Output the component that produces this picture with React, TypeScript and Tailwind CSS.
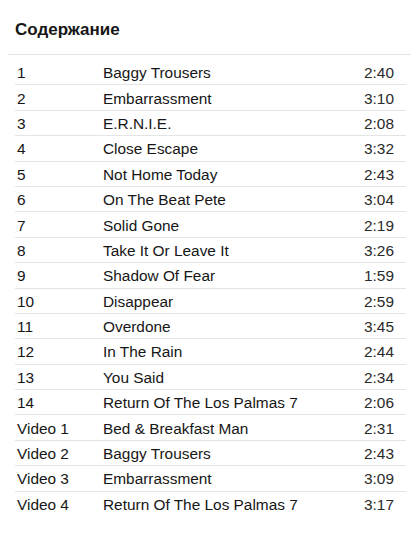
import React from 'react';

interface Track {
  num: string;
  title: string;
  time: string;
}

const tracks: Track[] = [
  { num: '1', title: 'Baggy Trousers', time: '2:40' },
  { num: '2', title: 'Embarrassment', time: '3:10' },
  { num: '3', title: 'E.R.N.I.E.', time: '2:08' },
  { num: '4', title: 'Close Escape', time: '3:32' },
  { num: '5', title: 'Not Home Today', time: '2:43' },
  { num: '6', title: 'On The Beat Pete', time: '3:04' },
  { num: '7', title: 'Solid Gone', time: '2:19' },
  { num: '8', title: 'Take It Or Leave It', time: '3:26' },
  { num: '9', title: 'Shadow Of Fear', time: '1:59' },
  { num: '10', title: 'Disappear', time: '2:59' },
  { num: '11', title: 'Overdone', time: '3:45' },
  { num: '12', title: 'In The Rain', time: '2:44' },
  { num: '13', title: 'You Said', time: '2:34' },
  { num: '14', title: 'Return Of The Los Palmas 7', time: '2:06' },
  { num: 'Video 1', title: 'Bed & Breakfast Man', time: '2:31' },
  { num: 'Video 2', title: 'Baggy Trousers', time: '2:43' },
  { num: 'Video 3', title: 'Embarrassment', time: '3:09' },
  { num: 'Video 4', title: 'Return Of The Los Palmas 7', time: '3:17' },
];

const App: React.FC = () => {
  return (
    <div className="w-[420px] h-[540px] overflow-hidden bg-white font-['Liberation_Sans',Arial,sans-serif] text-[#161616]">
      {/* Header */}
      <div className="h-[54px] pl-[15px] pt-[19px]">
        <h1 className="text-[17px] font-bold leading-[22px]">Содержание</h1>
      </div>
      <div className="ml-[8px] mr-[9px] border-t border-[#e4e4e4]" />

      {/* Track list */}
      <div className="pt-[5px] pl-[15px] pr-[14px]">
        {tracks.map((t, i) => (
          <div
            key={i}
            className={`flex items-center h-[25.4px] pt-[2px] text-[15.4px] leading-[18px] ${
              i < tracks.length - 1 ? 'border-b border-[#e4e4e4]' : ''
            }`}
          >
            <span className="w-[88px] pl-[2px] shrink-0">{t.num}</span>
            <span className="flex-1 truncate">{t.title}</span>
            <span className="pr-[12px] text-[#2a2a2a]">{t.time}</span>
          </div>
        ))}
      </div>
    </div>
  );
};

export default App;
